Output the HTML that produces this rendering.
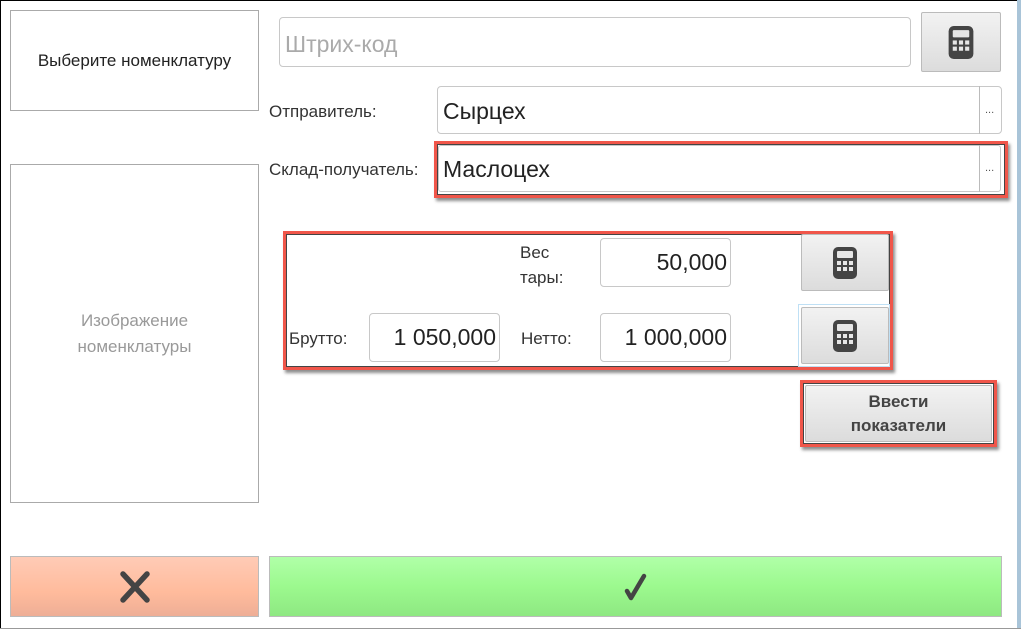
<!DOCTYPE html>
<html><head><meta charset="utf-8"><style>
*{box-sizing:border-box;margin:0;padding:0}
body{width:1021px;height:632px;background:#fff;position:relative;overflow:hidden;font-family:"Liberation Sans","DejaVu Sans",sans-serif;color:#333}
.a{position:absolute}
.frame{left:0;top:0;width:1018px;height:629px;border-top:1px solid #000;border-left:1px solid #000}
.rb{left:1017px;top:0;width:4px;height:632px;background:#a9c4d8}
.bot{left:0;top:628px;width:1021px;height:4px;border-top:1px solid #999;background:#fff}
.box{border:1px solid #aaa;background:#fff;display:flex;align-items:center;justify-content:center;text-align:center}
.inp{border:1px solid #c8c8c8;border-radius:4px;background:#fff}
.btn{border:1px solid #bbb;border-radius:2px;background:linear-gradient(#f2f2f2,#dcdcdc);display:flex;align-items:center;justify-content:center}
.red{border:3px solid #f0564a;box-shadow:2px 3px 3px rgba(0,0,0,.45), inset 0 0 0 1px #444}
.lbl{font-size:17px;color:#333}
.val{font-size:23px;color:#222;display:flex;align-items:center;justify-content:flex-end;padding-right:3px}
</style></head><body>
<div class="a frame"></div>
<div class="a rb"></div>
<div class="a bot"></div>

<div class="a box" style="left:10px;top:10px;width:249px;height:101px;font-size:17px;color:#222">Выберите номенклатуру</div>
<div class="a box" style="left:10px;top:164px;width:249px;height:339px;font-size:17px;color:#999;line-height:26px">Изображение<br>номенклатуры</div>

<div class="a inp" style="left:279px;top:17px;width:632px;height:50px;font-size:23px;color:#aaa;padding:13px 5px 0">Штрих-код</div>
<div class="a btn" style="left:921px;top:12px;width:80px;height:60px"><svg width="26" height="33" viewBox="0 0 24 32"><rect x="0" y="0" width="24" height="32" rx="5" fill="#444"/><rect x="4" y="4" width="16" height="7" rx="1" fill="#e6e6e6"/><g fill="#e6e6e6"><rect x="4" y="14" width="4" height="4"/><rect x="10" y="14" width="4" height="4"/><rect x="16" y="14" width="4" height="4"/><rect x="4" y="20" width="4" height="4"/><rect x="10" y="20" width="4" height="4"/><rect x="16" y="20" width="4" height="4"/></g></svg></div>

<div class="a lbl" style="left:269px;top:102px">Отправитель:</div>
<div class="a inp" style="left:437px;top:86px;width:565px;height:48px;font-size:23px;color:#222;padding:11px 5px 0">Сырцех</div>
<div class="a" style="left:979px;top:86px;width:1px;height:48px;background:#bbb"></div>
<div class="a" style="left:985px;top:104px;font-size:11px;color:#555">...</div>

<div class="a lbl" style="left:269px;top:160px">Склад-получатель:</div>
<div class="a red" style="left:434px;top:141px;width:574px;height:57px"></div>
<div class="a inp" style="left:438px;top:145px;width:563px;height:47px;font-size:23px;color:#222;padding:10px 4px 0;border-radius:3px">Маслоцех</div>
<div class="a" style="left:979px;top:145px;width:1px;height:47px;background:#bbb"></div>
<div class="a" style="left:985px;top:162px;font-size:11px;color:#555">...</div>

<div class="a red" style="left:283px;top:231px;width:610px;height:139px"></div>
<div class="a lbl" style="left:520px;top:240px;line-height:25px">Вес<br>тары:</div>
<div class="a inp val" style="left:600px;top:238px;width:131px;height:49px">50,000</div>
<div class="a btn" style="left:801px;top:234px;width:88px;height:57px"><svg width="24" height="32" viewBox="0 0 24 32"><rect x="0" y="0" width="24" height="32" rx="5" fill="#444"/><rect x="4" y="4" width="16" height="7" rx="1" fill="#e6e6e6"/><g fill="#e6e6e6"><rect x="4" y="14" width="4" height="4"/><rect x="10" y="14" width="4" height="4"/><rect x="16" y="14" width="4" height="4"/><rect x="4" y="20" width="4" height="4"/><rect x="10" y="20" width="4" height="4"/><rect x="16" y="20" width="4" height="4"/></g></svg></div>
<div class="a lbl" style="left:289px;top:329px">Брутто:</div>
<div class="a inp val" style="left:369px;top:313px;width:131px;height:49px">1 050,000</div>
<div class="a lbl" style="left:521px;top:329px">Нетто:</div>
<div class="a inp val" style="left:600px;top:313px;width:131px;height:49px">1 000,000</div>
<div class="a" style="left:798px;top:304px;width:92px;height:63px;border:1px solid #bfe0f5"></div>
<div class="a btn" style="left:801px;top:307px;width:88px;height:57px"><svg width="24" height="32" viewBox="0 0 24 32"><rect x="0" y="0" width="24" height="32" rx="5" fill="#444"/><rect x="4" y="4" width="16" height="7" rx="1" fill="#e6e6e6"/><g fill="#e6e6e6"><rect x="4" y="14" width="4" height="4"/><rect x="10" y="14" width="4" height="4"/><rect x="16" y="14" width="4" height="4"/><rect x="4" y="20" width="4" height="4"/><rect x="10" y="20" width="4" height="4"/><rect x="16" y="20" width="4" height="4"/></g></svg></div>

<div class="a red" style="left:800px;top:380px;width:197px;height:67px"></div>
<div class="a btn" style="left:805px;top:385px;width:187px;height:57px;font-weight:bold;font-size:17px;color:#444;text-align:center;line-height:24px">Ввести<br>показатели</div>

<div class="a" style="left:10px;top:556px;width:249px;height:61px;border:1px solid #bbb;background:linear-gradient(#ffcbb6,#ffbb9c 60%,#eeae96);display:flex;align-items:center;justify-content:center"><svg width="34" height="34" viewBox="0 0 34 34"><path d="M5 4L29 30M29 4L5 30" stroke="#444" stroke-width="5.5" stroke-linecap="round"/></svg></div>
<div class="a" style="left:269px;top:556px;width:733px;height:61px;border:1px solid #bbb;background:linear-gradient(#b0ffa8,#9cf98e 50%,#8ee882);display:flex;align-items:center;justify-content:center"><svg width="24" height="28" viewBox="0 0 24 28"><path d="M3 18L7 25L20 3" stroke="#444" stroke-width="4.5" fill="none" stroke-linecap="round" stroke-linejoin="round"/></svg></div>
</body></html>
